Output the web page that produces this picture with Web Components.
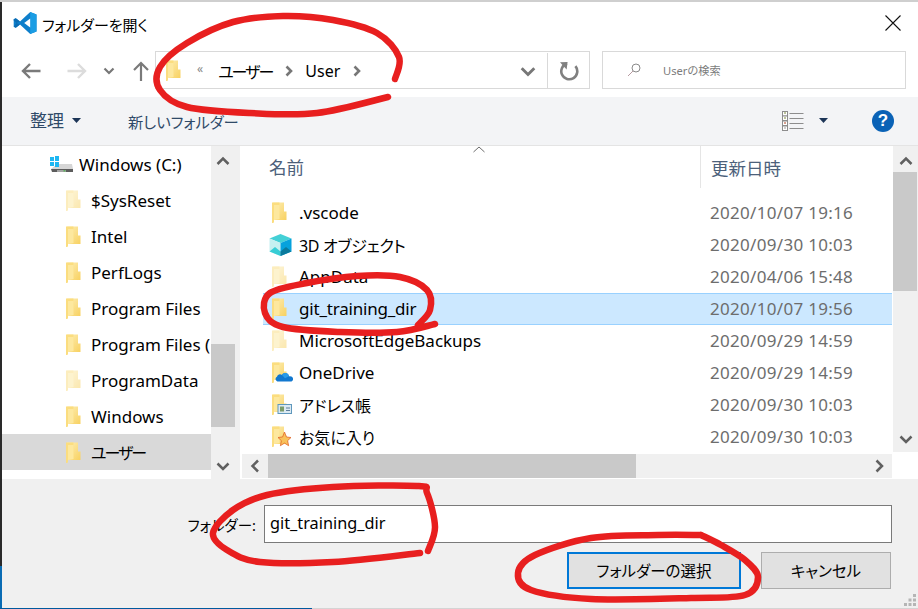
<!DOCTYPE html>
<html lang="ja">
<head>
<meta charset="utf-8">
<title>フォルダーを開く</title>
<style>
  html, body { margin: 0; height: 609px; overflow: hidden; }
  body {
    background:
      linear-gradient(#cfcfcf, #cfcfcf) top left / 100% 2px no-repeat,
      linear-gradient(#005a9e, #005a9e) bottom left / 312px 1px no-repeat,
      linear-gradient(#d4d4d4, #d4d4d4) bottom right / 606px 1px no-repeat,
      linear-gradient(#2a2a2a 93%, #0a6cb4 93%);
    font-family: "Noto Sans", "Noto Sans CJK JP", sans-serif;
    font-feature-settings: "palt";
  }
  .jp { font-size: 16px; }
  .tight { letter-spacing: -2px; }
  .snug { letter-spacing: -.3px; }
  .git { letter-spacing: -.2px; }
</style>
</head>
<body>
<open-dialog>
  <dialog-titlebar slot="title">フォルダーを開く</dialog-titlebar>
  <address-bar slot="address"></address-bar>
  <dialog-toolbar slot="toolbar"></dialog-toolbar>
  <nav-tree slot="tree">
    <nav-item depth="1"><drive-icon slot="icon"></drive-icon>Windows (C:)</nav-item>
    <nav-item><folder-icon slot="icon" faded></folder-icon>$SysReset</nav-item>
    <nav-item><folder-icon slot="icon"></folder-icon>Intel</nav-item>
    <nav-item><folder-icon slot="icon"></folder-icon>PerfLogs</nav-item>
    <nav-item><folder-icon slot="icon"></folder-icon>Program Files</nav-item>
    <nav-item><folder-icon slot="icon"></folder-icon>Program Files (</nav-item>
    <nav-item><folder-icon slot="icon" faded></folder-icon>ProgramData</nav-item>
    <nav-item><folder-icon slot="icon"></folder-icon>Windows</nav-item>
    <nav-item selected><folder-icon slot="icon"></folder-icon><span class="jp tight">ユーザー</span></nav-item>
  </nav-tree>
  <file-list slot="files">
    <file-row date="2020/10/07 19:16"><folder-icon slot="icon"></folder-icon>.vscode</file-row>
    <file-row date="2020/09/30 10:03"><cube-icon slot="icon"></cube-icon><span class="jp snug">3D オブジェクト</span></file-row>
    <file-row date="2020/04/06 15:48"><folder-icon slot="icon" faded></folder-icon>AppData</file-row>
    <file-row date="2020/10/07 19:56" selected><folder-icon slot="icon"></folder-icon><span class="git">git_training_dir</span></file-row>
    <file-row date="2020/09/29 14:59"><folder-icon slot="icon" faded></folder-icon>MicrosoftEdgeBackups</file-row>
    <file-row date="2020/09/29 14:59"><folder-icon slot="icon" badge="cloud"></folder-icon>OneDrive</file-row>
    <file-row date="2020/09/30 10:03"><folder-icon slot="icon" badge="card"></folder-icon><span class="jp">アドレス帳</span></file-row>
    <file-row date="2020/09/30 10:03"><folder-icon slot="icon" badge="star"></folder-icon><span class="jp">お気に入り</span></file-row>
  </file-list>
  <dialog-footer slot="footer"></dialog-footer>
</open-dialog>
<red-ink></red-ink>

<script>
const chevron = (dir, color = "#606060", size = 14) => {
  const d = { up: "M1.500 10 7 4.500l5.500 5.500", down: "M1.500 4.500 7 10l5.500-5.500", left: "M10 1.500 4.500 7l5.500 5.500", right: "M4.500 1.500 10 7l-5.500 5.500" }[dir];
  return `<svg width="${size}" height="${size}" viewBox="0 0 14 14"><path d="${d}" fill="none" stroke="${color}" stroke-width="2.500"/></svg>`;
};
const crumbSep = `<svg width="9" height="12" viewBox="0 0 9 12"><path d="M1.500 1.500 6 6l-4.500 4.500" fill="none" stroke="#777" stroke-width="2.600"/></svg>`;

class OpenDialog extends HTMLElement {
  constructor() {
    super();
    this.attachShadow({ mode: "open" });
    this.shadowRoot.innerHTML = `
      <style>
        :host { display: grid; grid-template-rows: 45px 50px 49px 333px 129px; margin: 2px 0 0 2px; width: 916px; height: 606px; background: #fff; }
        .content { display: grid; grid-template-columns: 209px 24px 5px 1fr; min-height: 0; }
        .gap { background: #f0f0f0; }
        v-scrollbar { height: 333px; }
      </style>
      <slot name="title"></slot>
      <slot name="address"></slot>
      <slot name="toolbar"></slot>
      <div class="content">
        <slot name="tree"></slot>
        <v-scrollbar thumb-top="198" thumb-height="83"></v-scrollbar>
        <div class="gap"></div>
        <slot name="files"></slot>
      </div>
      <slot name="footer"></slot>
    `;
  }
}

class DialogTitlebar extends HTMLElement {
  constructor() {
    super();
    this.attachShadow({ mode: "open" });
    this.shadowRoot.innerHTML = `
      <style>
        :host { display: flex; align-items: center; padding: 0 17px 3px 11px; font-size: 15px; color: #000; }
        .title { margin-left: 5px; flex: 1; position: relative; top: 1px; }
        svg { display: block; }
      </style>
      <svg width="24" height="24" viewBox="0 0 24 24">
        <path d="M17.200 1 23.500 3.600V20.400L17.200 23 7 13.600l-4.200 3.200L.7 15.700V8.300L2.800 7.200 7 10.400Z" fill="#0e7fcb"/>
        <path d="M17.200 1 23.500 3.600V20.400L17.200 23Z" fill="#1b9de4"/>
        <path d="M17.200 7.400 11.200 12l6 4.600Z" fill="#fff"/>
        <path d="M.7 8.300 2.800 7.200 7 10.400 3.400 12 .7 9.500ZM.7 15.700 3.400 12 7 13.600 2.800 16.800Z" fill="#0a6cb4"/>
      </svg>
      <span class="title"><slot></slot></span>
      <svg width="16" height="16" viewBox="0 0 16 16"><path d="M.5.5l15 15M15.500.5l-15 15" stroke="#111" stroke-width="1.100" fill="none"/></svg>
    `;
  }
}

class AddressBar extends HTMLElement {
  constructor() {
    super();
    this.attachShadow({ mode: "open" });
    this.shadowRoot.innerHTML = `
      <style>
        :host { display: flex; align-items: center; padding: 0 12px 4px 18px; height: 50px; box-sizing: border-box; }
        svg { display: block; flex: none; }
        .nav { display: flex; align-items: center; width: 135px; flex: none; padding-top: 2px; }
        .box { display: flex; align-items: center; height: 38px; box-sizing: border-box; border: 1px solid #d9d9d9; width: 435px; flex: none; font-size: 16px; color: #000; padding: 1px 0 0 10px; }
        .box folder-icon { margin-right: 16px; }
        .small { color: #888; font-size: 12px; margin-right: 15px; position: relative; top: -2px; }
        .seg { margin-right: 13px; }
        .seg.kana { letter-spacing: -2px; }
        .sep { margin-right: 11px; }
        .grow { flex: 1; }
        .refresh { border-left: 1px solid #d9d9d9; height: 36px; width: 41px; display: flex; align-items: center; justify-content: center; margin-left: 11px; }
        .search { margin-left: 12px; flex: 1; height: 38px; box-sizing: border-box; border: 1px solid #d9d9d9; display: flex; align-items: center; padding-left: 24px; font-size: 11.200px; color: #7c7c7c; }
        .search svg { margin-right: 22px; }
      </style>
      <div class="nav">
        <svg width="22" height="18" viewBox="0 0 22 18"><path d="M20.500 9H3M10 2 3 9l7 7" fill="none" stroke="#7a7a7a" stroke-width="2.400"/></svg>
        <svg style="margin-left:24px" width="22" height="18" viewBox="0 0 22 18"><path d="M1.500 9H19M12 2l7 7-7 7" fill="none" stroke="#dcdcdc" stroke-width="2.400"/></svg>
        <svg style="margin-left:15px" width="12" height="10" viewBox="0 0 12 10"><path d="M1.500 2.500 6 7l4.500-4.500" fill="none" stroke="#777" stroke-width="2.200"/></svg>
        <svg style="margin-left:17px" width="18" height="22" viewBox="0 0 18 22"><path d="M9 21V3M2 10l7-7 7 7" fill="none" stroke="#7a7a7a" stroke-width="2.200"/></svg>
      </div>
      <div class="box">
        <folder-icon></folder-icon>
        <span class="small">«</span>
        <span class="seg kana">ユーザー</span>
        <span class="sep">${crumbSep}</span>
        <span class="seg">User</span>
        <span>${crumbSep}</span>
        <span class="grow"></span>
        ${chevron("down", "#777", 16)}
        <span class="refresh">
          <svg width="20" height="20" viewBox="0 0 20 20"><path d="M5.800 3.600A8 8 0 1 0 14.600 3.400" fill="none" stroke="#808080" stroke-width="2.600" transform="rotate(18 10 10)"/><path d="M1 1.200 8.600 1 7.600 8.600Z" fill="#808080"/></svg>
        </span>
      </div>
      <div class="search">
        <svg width="14" height="14" viewBox="0 0 14 14"><circle cx="9" cy="5" r="4" fill="none" stroke="#8a8a8a"/><path d="M6 8 1 13" stroke="#b79aa0"/></svg>
        Userの検索
      </div>
    `;
  }
}

class DialogToolbar extends HTMLElement {
  constructor() {
    super();
    this.attachShadow({ mode: "open" });
    this.shadowRoot.innerHTML = `
      <style>
        :host { display: flex; align-items: center; height: 49px; box-sizing: border-box; padding: 0 24px 1px 28px; background: #f3f4f6; border-bottom: 1px solid #e4e4e4; font-size: 15.300px; color: #2f4a68; }
        svg { display: block; }
        .org { font-size: 17px; position: relative; top: -1px; }
        .caret { margin-left: 8px; }
        .new { margin-left: 47px; flex: 1; }
        .view { margin-right: 15px; }
        .help { margin-left: 44px; width: 22px; height: 22px; border-radius: 50%; background: #0a62b6; color: #fff; font: bold 17px/22px "Liberation Sans", sans-serif; text-align: center; }
      </style>
      <span class="org">整理</span>
      <svg class="caret" width="9" height="5" viewBox="0 0 9 5"><path d="M0 0h9L4.500 5Z" fill="#1c3557"/></svg>
      <span class="new">新しいフォルダー</span>
      <svg class="view" width="22" height="20" viewBox="0 0 22 20">
        <g fill="#fff" stroke="#8d8d8d"><rect x=".5" y=".5" width="5" height="4.500"/><rect x=".5" y="5" width="5" height="4.500"/><rect x=".5" y="10" width="5" height="4.500"/><rect x=".5" y="15" width="5" height="4.500"/></g>
        <path d="M2 2h2M2 7h2" stroke="#7a8a3a"/><path d="M2 12h2" stroke="#b04020"/><path d="M2 17h2" stroke="#999"/>
        <path d="M7.500 2.500h14M7.500 7.500h14M7.500 12.500h14M7.500 17.500h14" stroke="#8d8d8d"/>
      </svg>
      <svg width="9" height="5" viewBox="0 0 9 5"><path d="M0 0h9L4.500 5Z" fill="#1c3557"/></svg>
      <span class="help">?</span>
    `;
  }
}

class VScrollbar extends HTMLElement {
  constructor() {
    super();
    this.attachShadow({ mode: "open" });
  }
  connectedCallback() {
    const top = this.getAttribute("thumb-top");
    const h = this.getAttribute("thumb-height");
    const inset = this.getAttribute("thumb-inset") || 0;
    this.shadowRoot.innerHTML = `
      <style>
        :host { display: block; position: relative; background: #f0f0f0; }
        .thumb { position: absolute; left: 0; right: ${inset}px; top: ${top}px; height: ${h}px; background: #c9c9c9; }
        .up, .down { position: absolute; left: 0; right: 0; height: 26px; display: flex; align-items: center; justify-content: center; }
        .up { top: 2px; }
        .down { bottom: 0; }
      </style>
      <div class="up">${chevron("up")}</div>
      <div class="thumb"></div>
      <div class="down">${chevron("down")}</div>
    `;
  }
}

class NavTree extends HTMLElement {
  constructor() {
    super();
    this.attachShadow({ mode: "open" });
    this.shadowRoot.innerHTML = `
      <style>
        :host { display: block; background: #fff; overflow: hidden; font-size: 17px; color: #000; }
      </style>
      <slot></slot>
    `;
  }
}

class NavItem extends HTMLElement {
  constructor() {
    super();
    this.attachShadow({ mode: "open" });
    this.shadowRoot.innerHTML = `
      <style>
        :host { display: flex; align-items: center; height: 36px; padding-left: 64px; white-space: nowrap; overflow: hidden; }
        :host([depth="1"]) { padding-left: 48px; }
        :host([selected]) { background: #d9d9d9; }
        .icon { width: 25px; flex: none; display: flex; }
        :host([depth="1"]) .icon { width: 29px; }
      </style>
      <span class="icon"><slot name="icon"></slot></span><slot></slot>
    `;
  }
}

class FileList extends HTMLElement {
  constructor() {
    super();
    this.attachShadow({ mode: "open" });
    this.shadowRoot.innerHTML = `
      <style>
        :host { display: grid; grid-template-columns: 1fr 26px; grid-template-rows: 308px 25px; min-width: 0; height: 333px; background: #fff; font-size: 17px; color: #000; }
        .pane { display: flex; flex-direction: column; min-height: 0; overflow: hidden; }
        .head { display: flex; height: 42px; flex: none; position: relative; color: #4c607a; align-items: center; font-size: 17.500px; }
        .head span { position: relative; top: -1px; }
        .name { width: 460px; padding-left: 29px; box-sizing: border-box; }
        .date { border-left: 1px solid #e5e5e5; height: 100%; padding-left: 10px; display: flex; align-items: center; }
        .head .date { top: 0; }
        .sort { position: absolute; left: 233px; top: 0; }
        .rows { padding: 9px 0 0 23px; flex: 1; min-height: 0; }
        v-scrollbar { height: 306px; margin-left: 1px; }
        .hbar { display: flex; align-items: center; justify-content: space-between; background: #f0f0f0; height: 24px; margin-left: 2px; padding: 0 6px; position: relative; }
        .hthumb { position: absolute; left: 26px; top: 0; bottom: 0; width: 368px; background: #c9c9c9; }
        .corner { background: #fff; }
      </style>
      <div class="pane">
        <div class="head">
          <svg class="sort" width="12" height="7" viewBox="0 0 12 7"><path d="M.5 6 6 1l5.500 5" fill="none" stroke="#6d6d6d"/></svg>
          <span class="name">名前</span><span class="date">更新日時</span>
        </div>
        <div class="rows"><slot></slot></div>
      </div>
      <v-scrollbar thumb-top="26" thumb-height="119" thumb-inset="1"></v-scrollbar>
      <div class="hbar">${chevron("left")}<span class="hthumb"></span>${chevron("right")}</div>
      <div class="corner"></div>
    `;
  }
}

class FileRow extends HTMLElement {
  constructor() {
    super();
    this.attachShadow({ mode: "open" });
  }
  connectedCallback() {
    this.shadowRoot.innerHTML = `
      <style>
        :host { display: flex; align-items: center; height: 32px; box-sizing: border-box; padding: 0 0 1px 9px; white-space: nowrap; }
        :host([selected]) { background: #cce8ff; box-shadow: inset 0 1px #99d1ff, inset 0 -1px #99d1ff; }
        .icon { width: 27px; flex: none; display: flex; }
        .name { width: 411px; flex: none; }
        .date { color: #6d6d6d; letter-spacing: .3px; }
      </style>
      <span class="icon"><slot name="icon"></slot></span>
      <span class="name"><slot></slot></span>
      <span class="date">${this.getAttribute("date")}</span>
    `;
  }
}

class DialogFooter extends HTMLElement {
  constructor() {
    super();
    this.attachShadow({ mode: "open" });
    this.shadowRoot.innerHTML = `
      <style>
        :host { display: flex; flex-direction: column; background: #f0f0f0; padding: 26px 26px 0 0; position: relative; font-size: 15.500px; color: #000; }
        .line { display: flex; align-items: center; justify-content: flex-end; }
        label { margin-right: 8px; position: relative; font-size: 14.500px; }
        .input { width: 628px; height: 38px; box-sizing: border-box; border: 1px solid #7a7a7a; background: #fff; padding: 0 0 3px 5px; display: flex; align-items: center; font-size: 16.300px; }
        .buttons { margin-top: 9px; gap: 20px; padding-right: 1px; }
        .btn { height: 37px; box-sizing: border-box; background: #e1e1e1; border: 1px solid #adadad; display: flex; align-items: center; justify-content: center; }
        .primary { width: 174px; border: 2px solid #0078d7; }
        .cancel { width: 130px; }
        .grip { position: absolute; right: 2px; bottom: 2px; }
      </style>
      <div class="line"><label>フォルダー:</label><div class="input">git_training_dir</div></div>
      <div class="line buttons"><div class="btn primary">フォルダーの選択</div><div class="btn cancel">キャンセル</div></div>
      <svg class="grip" width="12" height="12" viewBox="0 0 12 12" fill="#b5b5b5"><rect x="9" y="0" width="3" height="3"/><rect x="4.500" y="4.500" width="3" height="3"/><rect x="9" y="4.500" width="3" height="3"/><rect x="0" y="9" width="3" height="3"/><rect x="4.500" y="9" width="3" height="3"/><rect x="9" y="9" width="3" height="3"/></svg>
    `;
  }
}

class FolderIcon extends HTMLElement {
  constructor() {
    super();
    this.attachShadow({ mode: "open" });
  }
  connectedCallback() {
    const badge = {
      cloud: `<path d="M6.500 19.500c-3 0-4-3.500-1.500-4.800.4-2.500 3.500-3.200 5-1.700 1.700-3 6.300-2.400 7 1.200 3-.4 4.500 1.300 4 3.500-.3 1.200-1.200 1.800-2.300 1.800Z" fill="#1278cf"/><path d="M10 13c1.700-3 6.300-2.400 7 1.200l-4 2Z" fill="#2a9be8"/>`,
      card: `<rect x="6" y="10.500" width="13.500" height="9" fill="#dbe9f2" stroke="#5f98bd"/><rect x="8" y="12.500" width="4" height="5" fill="#7b9c6a"/><path d="M14 14h4M14 16.500h4" stroke="#5f7f9d"/>`,
      star: `<path d="M12.500 6 14.400 11l4.600.5-3.400 3.200 1 5-4.100-2.600-4.100 2.600 1-5L6 11.500l4.600-.5Z" fill="#f8c25a" stroke="#e2642a" stroke-width=".8"/>`,
    }[this.getAttribute("badge")] || "";
    const opacity = this.hasAttribute("faded") ? 0.5 : 1;
    const uid = "g" + Math.random().toString(36).slice(2, 8);
    this.shadowRoot.innerHTML = `
      <style>:host { display: inline-flex; } svg { display: block; overflow: visible; }</style>
      <svg width="15" height="21" viewBox="0 0 15 21">
        <defs><linearGradient id="${uid}" x1="0" y1="0" x2="1" y2="1"><stop offset="0" stop-color="#fdeeb6"/><stop offset="1" stop-color="#f8d160"/></linearGradient></defs>
        <g opacity="${opacity}">
          <path d="M1 .5h11v9h2.500V18H3Z" fill="url(#${uid})"/>
          <path d="M0 .5h7.500v16.500L2 18v2.600L.6 21H0Z" fill="#fbdd7f"/>
          <path d="M7.500 3v14L2 18V3Z" fill="#fff0b8" opacity=".55"/>
        </g>
        ${badge}
      </svg>
    `;
  }
}

class DriveIcon extends HTMLElement {
  constructor() {
    super();
    this.attachShadow({ mode: "open" });
    this.shadowRoot.innerHTML = `
      <style>:host { display: inline-flex; } svg { display: block; }</style>
      <svg width="23" height="17" viewBox="0 0 23 17">
        <path d="M1 13 7 8h15l1 5Z" fill="#d6d6d6"/>
        <path d="M1 13h22v3H2Z" fill="#5c5c5c"/>
        <path d="M7 14h9v2H7Z" fill="#a4a4a4"/>
        <path d="M13.500 14.200h2v1.300h-2Z" fill="#4db14c"/>
        <g fill="#1eb7f2"><rect x="0" y="1" width="4" height="4"/><rect x="5" y="0" width="4" height="5"/><rect x="0" y="6" width="4" height="4"/><rect x="5" y="6" width="4" height="5"/></g>
      </svg>
    `;
  }
}

class CubeIcon extends HTMLElement {
  constructor() {
    super();
    this.attachShadow({ mode: "open" });
    this.shadowRoot.innerHTML = `
      <style>:host { display: inline-flex; margin-left: -3px; } svg { display: block; }</style>
      <svg width="23" height="22" viewBox="0 0 23 22">
        <path d="M11.500 0 22.500 4.500 11.500 9 .5 4.500Z" fill="#44d0d6"/>
        <path d="M.5 4.500 11.500 9v13L.5 17.500Z" fill="#c5f0f1"/>
        <path d="M22.500 4.500 11.500 9v13l11-4.500Z" fill="#06a2dd"/>
        <path d="M.5 17.500 6 13l5.500 4.500V22Z" fill="#37cdd5"/>
        <path d="M22.500 17.500 17 13l-5.500 4.500V22Z" fill="#0b7a9c"/>
      </svg>
    `;
  }
}

class RedInk extends HTMLElement {
  constructor() {
    super();
    this.attachShadow({ mode: "open" });
    const strokes = [
      [[395,79],[399,57],[377,33],[333,20],[283,16],[233,22],[187,43],[160,67],[160,90],[187,107],[250,113],[317,113],[388,97]],
      [[435,324],[397,332],[340,332],[283,327],[265,313],[270,293],[307,283],[357,276],[400,277],[427,290],[430,310],[418,325]],
      [[428,551],[435,527],[427,493],[417,486],[333,487],[267,495],[233,510],[213,533],[227,550],[260,562],[333,562],[420,553]],
      [[701,535],[658,535],[591,538],[535,555],[518,573],[531,590],[591,599],[691,598],[745,595],[758,577],[745,560],[721,545],[701,535]],
    ];
    const paths = strokes.map(p => {
      let d = `M${p[0]}`;
      for (let i = 0; i < p.length - 1; i++) {
        const a = p[i - 1] || p[i], b = p[i], c = p[i + 1], e = p[i + 2] || c;
        const c1 = [b[0] + (c[0] - a[0]) / 6, b[1] + (c[1] - a[1]) / 6];
        const c2 = [c[0] - (e[0] - b[0]) / 6, c[1] - (e[1] - b[1]) / 6];
        d += `C${c1} ${c2} ${c}`;
      }
      return `<path d="${d}"/>`;
    }).join("");
    this.shadowRoot.innerHTML = `
      <style>:host { position: absolute; left: 0; top: 0; pointer-events: none; } svg { display: block; }</style>
      <svg width="918" height="609" viewBox="0 0 918 609" fill="none" stroke="#e81f1f" stroke-width="6.500" stroke-linecap="round" stroke-linejoin="round">${paths}</svg>
    `;
  }
}

customElements.define("open-dialog", OpenDialog);
customElements.define("dialog-titlebar", DialogTitlebar);
customElements.define("address-bar", AddressBar);
customElements.define("dialog-toolbar", DialogToolbar);
customElements.define("v-scrollbar", VScrollbar);
customElements.define("nav-tree", NavTree);
customElements.define("nav-item", NavItem);
customElements.define("file-list", FileList);
customElements.define("file-row", FileRow);
customElements.define("dialog-footer", DialogFooter);
customElements.define("folder-icon", FolderIcon);
customElements.define("drive-icon", DriveIcon);
customElements.define("cube-icon", CubeIcon);
customElements.define("red-ink", RedInk);
</script>
</body>
</html>
